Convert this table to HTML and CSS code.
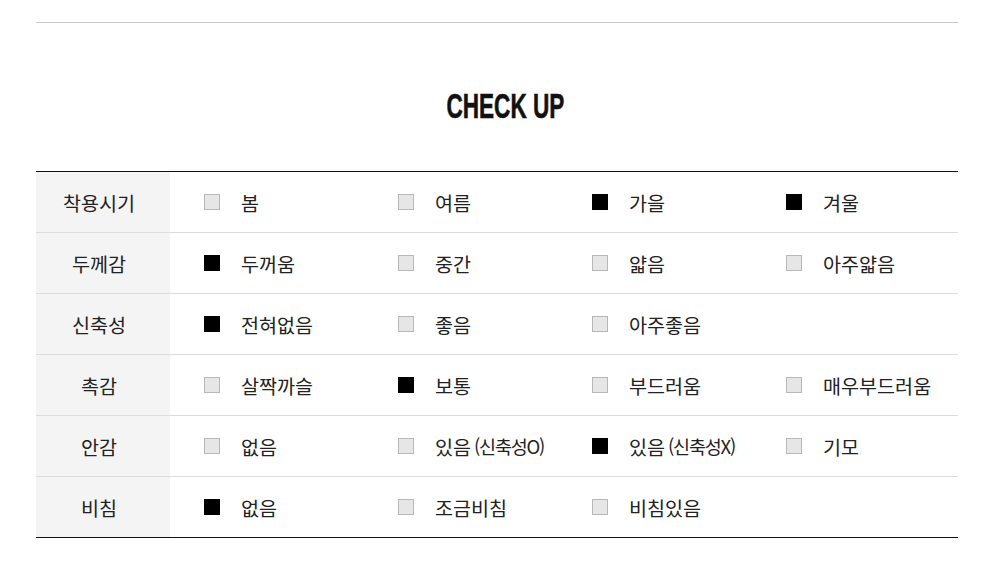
FILE: index.html
```html
<!DOCTYPE html>
<html lang="ko">
<head>
<meta charset="utf-8">
<title>CHECK UP</title>
<link rel="stylesheet" href="styles.css">
</head>
<body>
<div class="wrap">
  <h2 class="title"><span class="title-text">CHECK UP</span></h2>
  <div class="table">
    <div class="row">
      <div class="th">착용시기</div>
      <div class="opts">
        <div class="opt"><i class="box"></i>봄</div>
        <div class="opt"><i class="box"></i>여름</div>
        <div class="opt"><i class="box on"></i>가을</div>
        <div class="opt"><i class="box on"></i>겨울</div>
      </div>
    </div>
    <div class="row">
      <div class="th">두께감</div>
      <div class="opts">
        <div class="opt"><i class="box on"></i>두꺼움</div>
        <div class="opt"><i class="box"></i>중간</div>
        <div class="opt"><i class="box"></i>얇음</div>
        <div class="opt"><i class="box"></i>아주얇음</div>
      </div>
    </div>
    <div class="row">
      <div class="th">신축성</div>
      <div class="opts">
        <div class="opt"><i class="box on"></i>전혀없음</div>
        <div class="opt"><i class="box"></i>좋음</div>
        <div class="opt"><i class="box"></i>아주좋음</div>
      </div>
    </div>
    <div class="row">
      <div class="th">촉감</div>
      <div class="opts">
        <div class="opt"><i class="box"></i>살짝까슬</div>
        <div class="opt"><i class="box on"></i>보통</div>
        <div class="opt"><i class="box"></i>부드러움</div>
        <div class="opt"><i class="box"></i>매우부드러움</div>
      </div>
    </div>
    <div class="row">
      <div class="th">안감</div>
      <div class="opts">
        <div class="opt"><i class="box"></i>없음</div>
        <div class="opt"><i class="box"></i>있음<span class="paren">(신축성O)</span></div>
        <div class="opt"><i class="box on"></i>있음<span class="paren">(신축성X)</span></div>
        <div class="opt"><i class="box"></i>기모</div>
      </div>
    </div>
    <div class="row last">
      <div class="th">비침</div>
      <div class="opts">
        <div class="opt"><i class="box on"></i>없음</div>
        <div class="opt"><i class="box"></i>조금비침</div>
        <div class="opt"><i class="box"></i>비침있음</div>
      </div>
    </div>
  </div>
</div>
</body>
</html>
```

FILE: styles.css
```css
html, body {
  margin: 0;
  padding: 0;
  background: #fff;
}

body {
  font-family: "Noto Sans CJK KR", "Noto Sans", sans-serif;
  color: #222;
}

.wrap {
  margin: 22px 0 0 36px;
  width: 922px;
  border-top: 1px solid #c8c8c8;
}

.title {
  margin: 0;
  height: 148px;
  box-sizing: border-box;
  padding: 65px 0 0 16px;
  text-align: center;
  line-height: 1;
}

.title-text {
  display: inline-block;
  font-family: "Liberation Sans", sans-serif;
  font-weight: 700;
  font-size: 35px;
  color: #111;
  -webkit-text-stroke: 0.6px #111;
  transform: scaleX(0.645);
  transform-origin: center;
}

.table {
  border-top: 1px solid #111;
}

.row {
  display: flex;
  height: 60px;
  border-bottom: 1px solid #dcdcdc;
}

.row.last {
  border-bottom-color: #111;
}

.th {
  width: 134px;
  flex: none;
  box-sizing: border-box;
  padding-right: 8px;
  background: #f4f4f4;
  display: flex;
  align-items: center;
  justify-content: center;
  font-size: 19.6px;
}

.opts {
  flex: 1;
  display: grid;
  grid-template-columns: repeat(3, 194px) 1fr;
  padding-left: 34px;
  align-items: center;
}

.opt {
  display: flex;
  align-items: center;
  font-size: 19.6px;
  white-space: nowrap;
}

.box {
  display: block;
  width: 14px;
  height: 14px;
  border: 1px solid #b8b8b8;
  background: #e6e6e6;
  margin-right: 21px;
  flex: none;
}

.box.on {
  background: #000;
  border-color: #000;
}

.paren {
  margin-left: 3px;
  font-size: 18.5px;
  letter-spacing: -1.2px;
}
```
